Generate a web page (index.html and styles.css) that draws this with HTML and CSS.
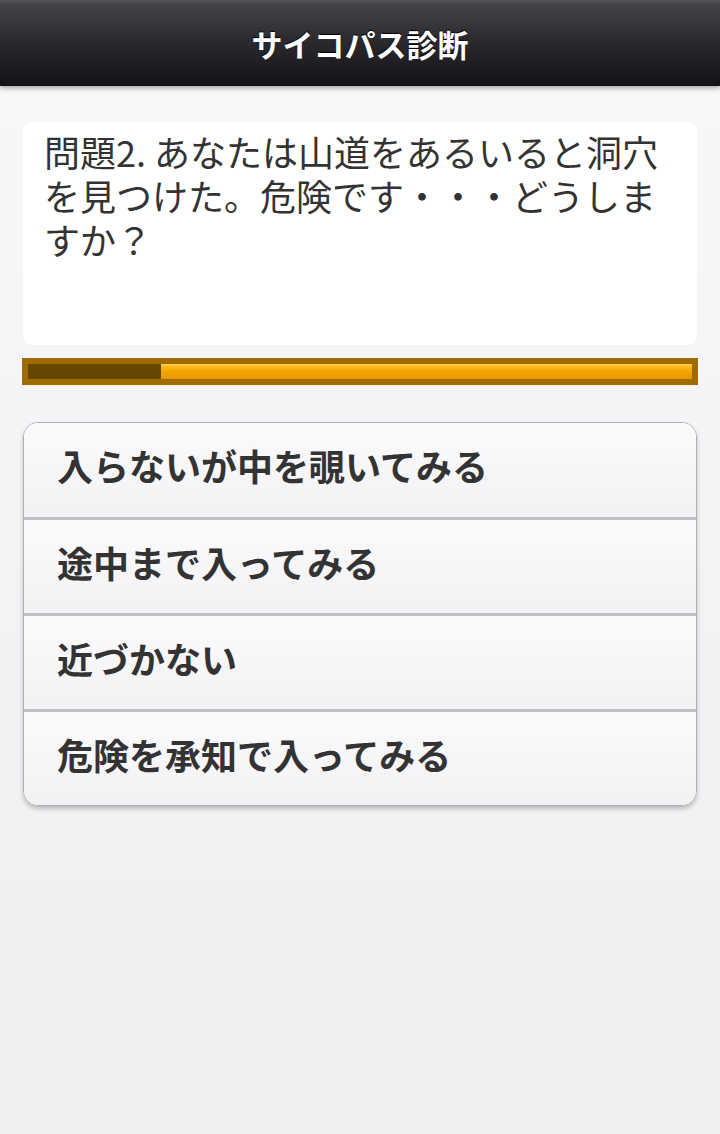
FILE: index.html
```html
<!DOCTYPE html>
<html lang="ja">
<head>
<meta charset="utf-8">
<title>サイコパス診断</title>
<link rel="stylesheet" href="styles.css">
</head>
<body>
<header class="bar">
  <h1 class="title">サイコパス診断</h1>
</header>
<main class="content">
  <section class="question">問題2. あなたは山道をあるいると洞穴を見つけた。危険です・・・どうしますか？</section>
  <div class="progress">
    <div class="progress-track">
      <div class="progress-done" style="width: 133px"></div>
      <div class="progress-rest"></div>
    </div>
  </div>
  <ul class="choices">
    <li class="choice">入らないが中を覗いてみる</li>
    <li class="choice">途中まで入ってみる</li>
    <li class="choice">近づかない</li>
    <li class="choice">危険を承知で入ってみる</li>
  </ul>
</main>
</body>
</html>
```
FILE: styles.css
```css
html, body {
  margin: 0;
  padding: 0;
}
body {
  width: 720px;
  min-height: 1134px;
  background: linear-gradient(#f8f8fa, #efeef0);
  font-family: "Noto Sans CJK JP", "Noto Sans", sans-serif;
  color: #333;
}
.bar {
  height: 86px;
  background: linear-gradient(#555458 0px, #444347 4px, #29272b 45px, #141216 86px);
  box-shadow: 0 2px 5px rgba(0,0,0,0.35);
  display: flex;
  align-items: center;
  justify-content: center;
  position: relative;
}
.title {
  margin: 0;
  font-size: 31px;
  font-weight: 700;
  color: #fff;
  letter-spacing: 0;
  text-shadow: 0 -1px 1px #000;
}
.content {
  padding: 36px 23px 0 23px;
  display: flex;
  flex-direction: column;
}
.question {
  background: #fff;
  border-radius: 9px;
  height: 223px;
  box-sizing: border-box;
  padding: 7px 21px 0 21px;
  font-size: 36px;
  line-height: 44px;
  color: #333;
}
.progress {
  margin: 13px -1px 0 -1px;
  height: 27px;
  background: #a06c00;
  box-sizing: border-box;
  padding: 6px 6px 6px 6px;
}
.progress-track {
  display: flex;
  height: 15px;
}
.progress-done {
  background: #684700;
}
.progress-rest {
  flex: 1;
  background: linear-gradient(#ffd36a 0px, #fcbd22 2px, #f3a600 7px, #e99800 15px);
}
.choices {
  list-style: none;
  margin: 37px 0 0 0;
  padding: 0;
  border: 1px solid #aeadb1;
  border-radius: 15px;
  overflow: hidden;
  box-shadow: 0 3px 4px rgba(0,0,0,0.22);
}
.choice {
  height: 93px;
  box-sizing: border-box;
  padding: 0 0 10px 33px;
  display: flex;
  align-items: center;
  font-size: 36px;
  font-weight: 700;
  color: #333;
  background: linear-gradient(#fbfafc, #f2f1f4);
}
.choice + .choice {
  border-top: 3px solid #bfbec2;
  height: 96px;
}
.choice:first-child {
  height: 94px;
}
```
